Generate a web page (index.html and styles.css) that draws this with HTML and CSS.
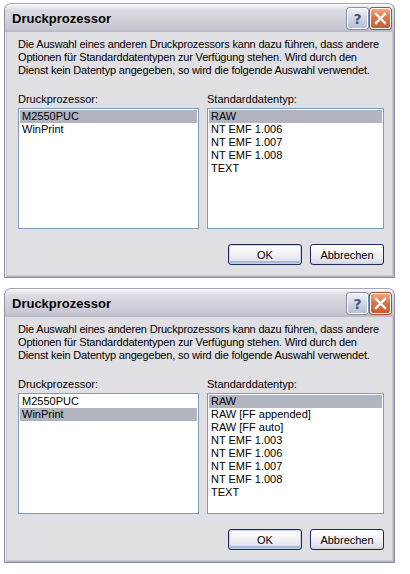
FILE: index.html
```html
<!DOCTYPE html>
<html lang="de">
<head>
<meta charset="utf-8">
<title>Druckprozessor</title>
<link rel="stylesheet" href="styles.css">
</head>
<body>
<div class="dialog d1">
  <div class="titlebar">
    <span class="title">Druckprozessor</span>
    <div class="caption-btns">
      <span class="cbtn help">?</span>
      <span class="cbtn close"><svg width="13" height="13" viewBox="0 0 13 13"><path d="M2 2 L11 11 M11 2 L2 11" stroke="#fff" stroke-width="2.4" stroke-linecap="square"/></svg></span>
    </div>
  </div>
  <div class="body">
    <p class="intro">Die Auswahl eines anderen Druckprozessors kann dazu führen, dass andere<br>Optionen für Standarddatentypen zur Verfügung stehen. Wird durch den<br>Dienst kein Datentyp angegeben, so wird die folgende Auswahl verwendet.</p>
    <div class="lists">
      <div class="col col-left">
        <div class="label">Druckprozessor:</div>
        <div class="listbox">
          <div class="item sel">M2550PUC</div>
          <div class="item">WinPrint</div>
        </div>
      </div>
      <div class="col col-right">
        <div class="label">Standarddatentyp:</div>
        <div class="listbox">
          <div class="item sel">RAW</div>
          <div class="item">NT EMF 1.006</div>
          <div class="item">NT EMF 1.007</div>
          <div class="item">NT EMF 1.008</div>
          <div class="item">TEXT</div>
        </div>
      </div>
    </div>
    <div class="buttons">
      <button class="btn default">OK</button>
      <button class="btn">Abbrechen</button>
    </div>
  </div>
</div>

<div class="dialog d2">
  <div class="titlebar">
    <span class="title">Druckprozessor</span>
    <div class="caption-btns">
      <span class="cbtn help">?</span>
      <span class="cbtn close"><svg width="13" height="13" viewBox="0 0 13 13"><path d="M2 2 L11 11 M11 2 L2 11" stroke="#fff" stroke-width="2.4" stroke-linecap="square"/></svg></span>
    </div>
  </div>
  <div class="body">
    <p class="intro">Die Auswahl eines anderen Druckprozessors kann dazu führen, dass andere<br>Optionen für Standarddatentypen zur Verfügung stehen. Wird durch den<br>Dienst kein Datentyp angegeben, so wird die folgende Auswahl verwendet.</p>
    <div class="lists">
      <div class="col col-left">
        <div class="label">Druckprozessor:</div>
        <div class="listbox">
          <div class="item">M2550PUC</div>
          <div class="item sel">WinPrint</div>
        </div>
      </div>
      <div class="col col-right">
        <div class="label">Standarddatentyp:</div>
        <div class="listbox">
          <div class="item sel">RAW</div>
          <div class="item">RAW [FF appended]</div>
          <div class="item">RAW [FF auto]</div>
          <div class="item">NT EMF 1.003</div>
          <div class="item">NT EMF 1.006</div>
          <div class="item">NT EMF 1.007</div>
          <div class="item">NT EMF 1.008</div>
          <div class="item">TEXT</div>
        </div>
      </div>
    </div>
    <div class="buttons">
      <button class="btn default">OK</button>
      <button class="btn">Abbrechen</button>
    </div>
  </div>
</div>
</body>
</html>
```

FILE: styles.css
```css
* { box-sizing: border-box; }

html, body {
  margin: 0;
  padding: 0;
  background: #ffffff;
}

body {
  padding-top: 3px;
  font-family: "Liberation Sans", Arial, sans-serif;
  font-size: 11px;
  color: #000;
}

.dialog {
  width: 391px;
  margin-left: 4px;
  border: 1px solid #8d8e9e;
  border-top-color: #a6a7b6;
  border-radius: 7px 7px 0 0;
  background: #c9c9d4;
  padding: 0 2px 2px;
  box-shadow: inset 1px 0 0 #f2f2f6, inset -1px 0 0 #b1b1be, inset 0 -1px 0 #b1b1be;
}

.d2 {
  margin-top: 10px;
}

.titlebar {
  height: 28px;
  margin: 0 -2px;
  padding: 0 3px 0 7px;
  display: flex;
  align-items: center;
  justify-content: space-between;
  border-radius: 6px 6px 0 0;
  background: linear-gradient(#fdfdfe 0, #eeeef2 2px, #dcdce4 6px, #d3d3dc 14px, #c8c8d3 24px, #b8b8c6 28px);
}

.title {
  font-family: "Liberation Sans", Arial, sans-serif;
  font-weight: bold;
  font-size: 13px;
  color: #000;
  padding-top: 1px;
}

.caption-btns {
  display: flex;
  gap: 2px;
  padding-top: 1px;
}

.cbtn {
  width: 21px;
  height: 21px;
  border-radius: 3px;
  border: 1px solid #ffffff;
  display: flex;
  align-items: center;
  justify-content: center;
  box-shadow: 0 0 0 1px #8a8fa6;
}

.help {
  background: linear-gradient(#eef1f7, #cdd4e2 55%, #b7c0d4);
  color: #4a5676;
  font-family: "DejaVu Sans", sans-serif;
  font-weight: bold;
  font-size: 14px;
  line-height: 1;
}

.close {
  background: linear-gradient(#f0a584, #de7448 45%, #c85a2e);
  box-shadow: 0 0 0 1px #a65232;
}

.body {
  background: #e0dfe3;
  padding: 6px 8px 10px 11px;
}

.intro {
  margin: 0;
  line-height: 13px;
  white-space: nowrap;
  letter-spacing: -0.18px;
}

.lists {
  display: flex;
  gap: 8px;
  margin-top: 16px;
}

.col-left { width: 181px; }
.col-right { width: 177px; }

.label {
  line-height: 13px;
  margin-bottom: 2px;
}

.listbox {
  height: 121px;
  background: #ffffff;
  border: 1px solid #7f9db9;
  padding: 1px;
}

.item {
  height: 13px;
  line-height: 13px;
  padding-left: 2px;
  white-space: nowrap;
}

.item.sel {
  background: #b2b4bf;
}

.buttons {
  display: flex;
  justify-content: flex-end;
  gap: 8px;
  margin-top: 15px;
}

.btn {
  width: 74px;
  height: 21px;
  font-family: "Liberation Sans", Arial, sans-serif;
  font-size: 11px;
  color: #000;
  border: 1px solid #1c2a5a;
  border-radius: 3px;
  background: linear-gradient(#ffffff 0, #f4f4f7 40%, #e2e2ea 85%, #cfd0dc 100%);
  padding: 0;
}

.btn.default {
  box-shadow: inset 0 0 0 1px #c4d1e6, inset 0 -2px 0 1px #a9b9d6;
}
```
